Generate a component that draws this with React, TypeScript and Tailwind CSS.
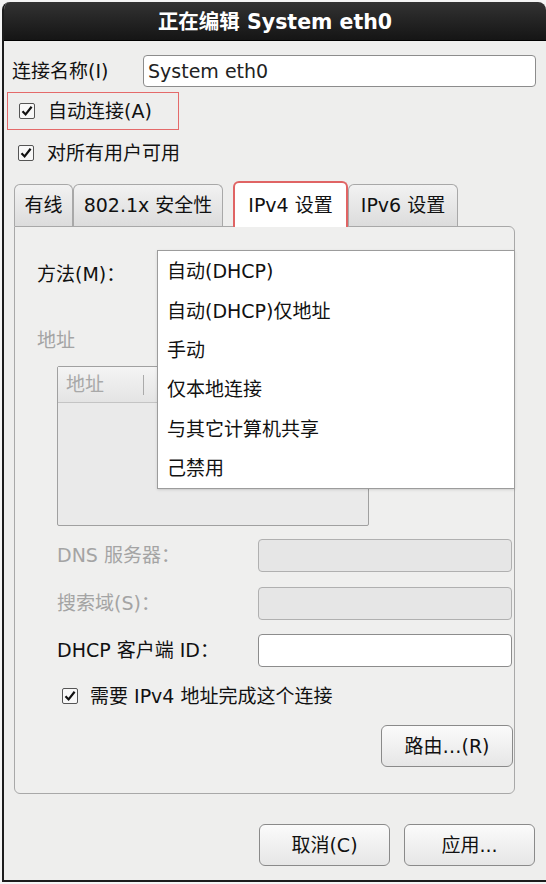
import React from 'react';

const FONT = { fontFamily: '"DejaVu Sans", "Noto Sans CJK SC", sans-serif' };

const methods = ["自动(DHCP)", "自动(DHCP)仅地址", "手动", "仅本地连接", "与其它计算机共享", "己禁用"];

const CheckBox = () => (
  <span className="flex h-[16px] w-[16px] items-center justify-center rounded-[2px] border border-[#555] bg-[#f8f8f8]">
    <svg width="12" height="12" viewBox="0 0 12 12">
      <path d="M1.5 6.2 L4.6 9.4 L10.6 1.8" fill="none" stroke="#111" strokeWidth="2.2" />
    </svg>
  </span>
);

const Tab = ({ label, active, w }: { label: string; active?: boolean; w: string }) => (
  <div
    className={
      active
        ? `${w} -mb-px flex h-[46px] items-center justify-center rounded-t-md border-2 border-b-0 border-[#e06464] bg-white text-[19px] text-[#111] z-10`
        : `${w} flex h-[42px] items-center justify-center rounded-t-md border border-b-0 border-[#a8a8a8] bg-gradient-to-b from-[#f2f2f2] to-[#dcdcdc] text-[19px] text-[#111]`
    }
  >
    {label}
  </div>
);

const Button = ({ label, w }: { label: string; w: string }) => (
  <button className={`${w} h-[42px] rounded-md border border-[#8a8a8a] bg-gradient-to-b from-[#fbfbfb] to-[#e6e6e6] text-[19px] text-[#111]`}>
    {label}
  </button>
);

const App = () => {
  return (
    <div className="h-[884px] w-[546px] overflow-hidden bg-[#f4f4f4] pt-[2px] pl-[2px]" style={FONT}>
      <div className="flex h-[880px] w-[544px] flex-col overflow-hidden rounded-t-lg border-l-2 border-b-2 border-[#1c1c1c] bg-[#eeeeed]">
        {/* title bar */}
        <div className="flex h-[39px] items-center justify-center border-b border-black bg-gradient-to-b from-[#333] to-[#151515] pt-[3px] text-[20.5px] font-bold text-white">
          正在编辑 System eth0
        </div>

        {/* name row */}
        <div className="mt-[14px] flex h-[32px] items-center pl-[8px]">
          <span className="w-[131px] text-[19px] text-[#111]">连接名称(I)</span>
          <div className="flex h-[32px] w-[393px] items-center rounded-[4px] border border-[#8c8c8c] bg-white pl-[4px] text-[19px] text-[#222]">
            System eth0
          </div>
        </div>

        <div className="mt-[5px] ml-[3px] flex h-[38px] w-[172px] items-center gap-[13px] border border-[#e46a6a] pl-[11px] text-[19px] text-[#111]">
          <CheckBox />
          <span>自动连接(A)</span>
        </div>

        <div className="mt-[6px] flex h-[34px] items-center gap-[13px] pl-[14px] text-[19px] text-[#111]">
          <CheckBox />
          <span>对所有用户可用</span>
        </div>

        {/* tabs */}
        <div className="mt-[11px] flex items-end pl-[10px]">
          <Tab label="有线" w="w-[59px]" />
          <Tab label="802.1x 安全性" w="w-[150px]" />
          <div className="w-[10px]" />
          <Tab label="IPv4 设置" w="w-[115px]" active />
          <Tab label="IPv6 设置" w="w-[110px]" />
        </div>

        {/* tab panel */}
        <div className="relative ml-[10px] flex h-[568px] w-[501px] flex-col rounded-b-md rounded-tr-md border border-[#a8a8a8] bg-[#efefee]">
          <div className="mt-[30px] flex h-[34px] items-center pl-[22px] text-[19px] text-[#111]">方法(M)：</div>

          <div className="mt-[38px] flex h-[22px] items-center pl-[22px] text-[19px] text-[#a4a4a4]">地址</div>

          <div className="mt-[15px] ml-[42px] flex h-[160px] w-[312px] flex-col rounded-[2px] border border-[#a0a0a0] bg-[#eaeaea]">
            <div className="flex h-[36px] items-center border-b border-[#c4c4c4] bg-gradient-to-b from-[#f4f4f4] to-[#e4e4e4] text-[19px] text-[#a8a8a8]">
              <span className="w-[85px] pl-[8px]">地址</span>
              <span className="h-[20px] w-px bg-[#aaa]" />
            </div>
          </div>

          <div className="mt-[13px] flex h-[33px] items-center pl-[42px]">
            <span className="w-[201px] text-[19px] text-[#a4a4a4]">DNS 服务器：</span>
            <div className="h-[33px] w-[254px] rounded-[4px] border border-[#b0b0b0] bg-[#e6e6e6]" />
          </div>

          <div className="mt-[15px] flex h-[33px] items-center pl-[42px]">
            <span className="w-[201px] text-[19px] text-[#a4a4a4]">搜索域(S)：</span>
            <div className="h-[33px] w-[254px] rounded-[4px] border border-[#b0b0b0] bg-[#e6e6e6]" />
          </div>

          <div className="mt-[14px] flex h-[33px] items-center pl-[42px]">
            <span className="w-[201px] text-[19px] text-[#111]">DHCP 客户端 ID：</span>
            <div className="h-[33px] w-[254px] rounded-[4px] border border-[#8c8c8c] bg-white" />
          </div>

          <div className="mt-[12px] flex h-[34px] items-center gap-[12px] pl-[47px] text-[19px] text-[#111]">
            <CheckBox />
            <span>需要 IPv4 地址完成这个连接</span>
          </div>

          <div className="mt-[12px] flex justify-end pr-[1px]">
            <Button label="路由…(R)" w="w-[132px]" />
          </div>

          {/* open method dropdown */}
          <div className="absolute left-[142px] top-[23px] flex h-[239px] w-[358px] flex-col border border-[#9c9c9c] bg-white pt-[1px] pl-[9px] shadow-sm">
            {methods.map(m => (
              <div key={m} className="flex h-[40px] items-center text-[19px] text-[#111]">
                {m}
              </div>
            ))}
          </div>
        </div>

        {/* bottom buttons */}
        <div className="mt-[30px] flex justify-end gap-[14px] pr-[11px]">
          <Button label="取消(C)" w="w-[131px]" />
          <Button label="应用..." w="w-[131px]" />
        </div>
      </div>
    </div>
  );
};

export default App;
